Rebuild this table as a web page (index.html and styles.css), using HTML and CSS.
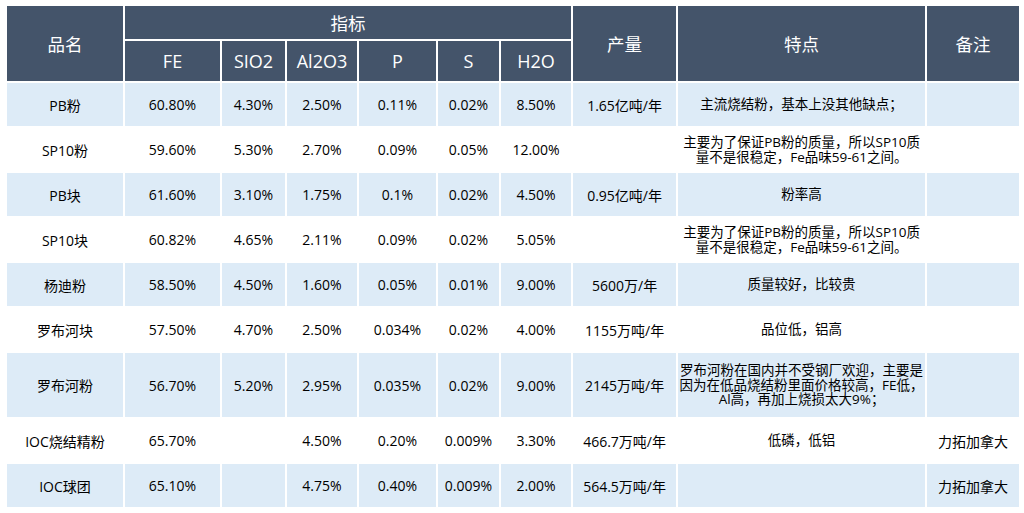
FILE: index.html
```html
<!DOCTYPE html>
<html lang="zh-CN">
<head>
<meta charset="utf-8">
<title>铁矿石指标</title>
<link rel="stylesheet" href="styles.css">
</head>
<body>
<table class="ore">
  <colgroup>
    <col class="c-name">
    <col class="c-fe">
    <col class="c-si">
    <col class="c-al">
    <col class="c-p">
    <col class="c-s">
    <col class="c-h2o">
    <col class="c-out">
    <col class="c-feat">
    <col class="c-note">
  </colgroup>
  <thead>
    <tr class="h1">
      <th rowspan="2" class="big">品名</th>
      <th colspan="6" class="big">指标</th>
      <th rowspan="2" class="big">产量</th>
      <th rowspan="2" class="big">特点</th>
      <th rowspan="2" class="big">备注</th>
    </tr>
    <tr class="h2">
      <th>FE</th><th>SIO2</th><th>Al2O3</th><th>P</th><th>S</th><th>H2O</th>
    </tr>
  </thead>
  <tbody>
    <tr class="alt">
      <td>PB粉</td><td>60.80%</td><td>4.30%</td><td>2.50%</td><td>0.11%</td><td>0.02%</td><td>8.50%</td><td>1.65亿吨/年</td><td class="feat">主流烧结粉，基本上没其他缺点；</td><td></td>
    </tr>
    <tr>
      <td>SP10粉</td><td>59.60%</td><td>5.30%</td><td>2.70%</td><td>0.09%</td><td>0.05%</td><td>12.00%</td><td></td><td class="feat">主要为了保证PB粉的质量，所以SP10质<br>量不是很稳定，Fe品味59-61之间。</td><td></td>
    </tr>
    <tr class="alt">
      <td>PB块</td><td>61.60%</td><td>3.10%</td><td>1.75%</td><td>0.1%</td><td>0.02%</td><td>4.50%</td><td>0.95亿吨/年</td><td class="feat">粉率高</td><td></td>
    </tr>
    <tr>
      <td>SP10块</td><td>60.82%</td><td>4.65%</td><td>2.11%</td><td>0.09%</td><td>0.02%</td><td>5.05%</td><td></td><td class="feat">主要为了保证PB粉的质量，所以SP10质<br>量不是很稳定，Fe品味59-61之间。</td><td></td>
    </tr>
    <tr class="alt">
      <td>杨迪粉</td><td>58.50%</td><td>4.50%</td><td>1.60%</td><td>0.05%</td><td>0.01%</td><td>9.00%</td><td>5600万/年</td><td class="feat">质量较好，比较贵</td><td></td>
    </tr>
    <tr>
      <td>罗布河块</td><td>57.50%</td><td>4.70%</td><td>2.50%</td><td>0.034%</td><td>0.02%</td><td>4.00%</td><td>1155万吨/年</td><td class="feat">品位低，铝高</td><td></td>
    </tr>
    <tr class="alt tall">
      <td>罗布河粉</td><td>56.70%</td><td>5.20%</td><td>2.95%</td><td>0.035%</td><td>0.02%</td><td>9.00%</td><td>2145万吨/年</td><td class="feat">罗布河粉在国内并不受钢厂欢迎，主要是<br>因为在低品烧结粉里面价格较高，FE低，<br>Al高，再加上烧损太大9%；</td><td></td>
    </tr>
    <tr>
      <td>IOC烧结精粉</td><td>65.70%</td><td></td><td>4.50%</td><td>0.20%</td><td>0.009%</td><td>3.30%</td><td>466.7万吨/年</td><td class="feat">低磷，低铝</td><td>力拓加拿大</td>
    </tr>
    <tr class="alt">
      <td>IOC球团</td><td>65.10%</td><td></td><td>4.75%</td><td>0.40%</td><td>0.009%</td><td>2.00%</td><td>564.5万吨/年</td><td class="feat"></td><td>力拓加拿大</td>
    </tr>
  </tbody>
</table>
</body>
</html>
```

FILE: styles.css
```css
html, body {
  margin: 0;
  padding: 0;
  background: #ffffff;
}

body {
  font-family: "Open Sans", "Noto Sans CJK SC", sans-serif;
  color: #000000;
}

.ore {
  margin: 4px 0 0 5px;
  border-collapse: separate;
  border-spacing: 2px;
  table-layout: fixed;
  width: 1016px;
}

.c-name { width: 116px; }
.c-fe { width: 95px; }
.c-si { width: 63px; }
.c-al { width: 70px; }
.c-p { width: 77px; }
.c-s { width: 61px; }
.c-h2o { width: 70px; }
.c-out { width: 103px; }
.c-feat { width: 247px; }
.c-note { width: 92px; }

.ore th {
  background: #44546a;
  color: #ffffff;
  font-weight: normal;
  font-size: 18px;
  padding: 0;
  text-align: center;
  vertical-align: middle;
}

.ore th.big {
  font-size: 17.5px;
}

.h1 { height: 33px; }
.h2 { height: 40px; }

.ore td {
  height: 43px;
  padding: 0;
  font-size: 14px;
  text-align: center;
  vertical-align: middle;
  white-space: nowrap;
  background: #ffffff;
}

.ore tr.alt td {
  background: #ddebf7;
}

.ore tr.tall td {
  height: 64px;
}

.ore td.feat {
  font-size: 13.5px;
  line-height: 14.5px;
}
```
